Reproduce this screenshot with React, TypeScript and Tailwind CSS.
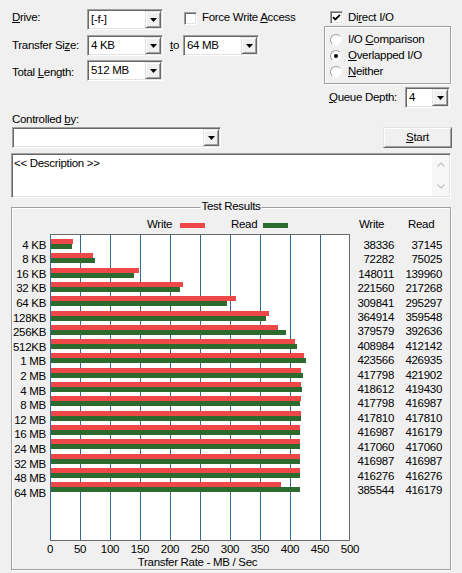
import React from 'react';

const rows: [string, number, number][] = [
  ['4 KB', 38336, 37145],
  ['8 KB', 72282, 75025],
  ['16 KB', 148011, 139960],
  ['32 KB', 221560, 217268],
  ['64 KB', 309841, 295297],
  ['128KB', 364914, 359548],
  ['256KB', 379579, 392636],
  ['512KB', 408984, 412142],
  ['1 MB', 423566, 426935],
  ['2 MB', 417798, 421902],
  ['4 MB', 418612, 419430],
  ['8 MB', 417798, 416987],
  ['12 MB', 417810, 417810],
  ['16 MB', 416987, 416179],
  ['24 MB', 417060, 417060],
  ['32 MB', 416987, 416987],
  ['48 MB', 416276, 416276],
  ['64 MB', 385544, 416179],
];

const sunken =
  'border border-t-[#a0a0a0] border-l-[#a0a0a0] border-r-white border-b-white shadow-[inset_1px_1px_0_#696969,inset_-1px_-1px_0_#e3e3e3]';
const raised =
  'border border-t-[#e3e3e3] border-l-[#e3e3e3] border-r-[#696969] border-b-[#696969] shadow-[inset_1px_1px_0_#fff,inset_-1px_-1px_0_#a0a0a0]';

function Arrow() {
  return (
    <svg width="7" height="4" viewBox="0 0 7 4">
      <path d="M0 0h7L3.5 4z" fill="#000" />
    </svg>
  );
}

function Combo({ value, className }: { value: string; className: string }) {
  return (
    <div className={`flex h-[21px] bg-white p-[1px] ${sunken} ${className}`}>
      <span className="flex-1 pl-[2px] leading-[17px] whitespace-nowrap">{value}</span>
      <span className={`w-[16px] h-full bg-[#f0f0f0] flex items-center justify-center ${raised}`}>
        <Arrow />
      </span>
    </div>
  );
}

function Check({ checked }: { checked?: boolean }) {
  return (
    <span className={`w-[13px] h-[13px] bg-white flex items-center justify-center ${sunken}`}>
      {checked && (
        <svg width="9" height="9" viewBox="0 0 9 9">
          <path d="M1 4.2l2.3 2.3L8 1.8" fill="none" stroke="#000" strokeWidth="1.8" />
        </svg>
      )}
    </span>
  );
}

function Radio({ checked }: { checked?: boolean }) {
  return (
    <span className="w-[12px] h-[12px] rounded-full bg-white border border-t-[#a0a0a0] border-l-[#a0a0a0] border-r-[#f4f4f4] border-b-[#f4f4f4] flex items-center justify-center">
      {checked && <span className="w-[4px] h-[4px] rounded-full bg-black" />}
    </span>
  );
}

function Chart() {
  return (
    <svg width="340" height="336" className="shrink-0 overflow-visible">
      <rect x="38.5" y="2.5" width="299" height="306" fill="#fff" stroke="#6a6a6a" />
      {[1, 2, 3, 4, 5, 6, 7, 8, 9].map((k) => (
        <line key={k} x1={38.5 + 30 * k} y1="3" x2={38.5 + 30 * k} y2="308" stroke="#336b98" />
      ))}
      <line x1="38.5" y1="3" x2="38.5" y2="308" stroke="#336b98" />
      {rows.map(([label, w, r], i) => {
        const y = Math.round(7 + i * 14.3);
        return (
          <g key={label}>
            <rect x="39" y={y} width={Math.round(50 + w * 0.0006) - 51} height="5" fill="#ee4747" />
            <rect x="39" y={y + 5} width={Math.round(50 + r * 0.0006) - 51} height="5" fill="#2d6a2d" />
            <text x="34" y={Math.round(16.5 + i * 14.6)} textAnchor="end">
              {label}
            </text>
          </g>
        );
      })}
      {[0, 50, 100, 150, 200, 250, 300, 350, 400, 450, 500].map((v, k) => (
        <text key={v} x={38 + 30 * k} y="321" textAnchor="middle">
          {v}
        </text>
      ))}
      <text x="185.5" y="334" textAnchor="middle">
        Transfer Rate - MB / Sec
      </text>
    </svg>
  );
}

export default function App() {
  return (
    <div className="w-[462px] h-[573px] bg-[#f0f0f0] text-black text-[11.5px] tracking-[-0.3px] overflow-hidden font-[Liberation_Sans,Arial,sans-serif]">
      {/* top controls */}
      <div className="flex">
        <div className="w-[324px] pl-[12px] pt-[9px]">
          <div className="flex items-center h-[21px]">
            <span className="w-[75px] mb-[3px]">
              <u>D</u>rive:
            </span>
            <Combo value="[-f-]" className="w-[76px]" />
            <span className="ml-[21px] mb-[3px] flex items-center">
              <Check />
              <span className="ml-[5px]">
                Force Write <u>A</u>ccess
              </span>
            </span>
          </div>
          <div className="flex items-center h-[21px] mt-[5px]">
            <span className="w-[75px]">
              Transfer Si<u>z</u>e:
            </span>
            <Combo value="4 KB" className="w-[76px]" />
            <span className="w-[20px] pl-[7px]">
              <u>t</u>o
            </span>
            <Combo value="64 MB" className="w-[76px]" />
          </div>
          <div className="flex items-center h-[21px] mt-[4px]">
            <span className="w-[75px] mt-[5px]">
              Total <u>L</u>ength:
            </span>
            <Combo value="512 MB" className="w-[76px]" />
          </div>
        </div>

        <div className="w-[127px] pt-[11px]">
          <div className="flex items-center h-[13px] pl-[6px]">
            <Check checked />
            <span className="ml-[5px]">
              Di<u>r</u>ect I/O
            </span>
          </div>
          <div className="mt-[2px] h-[58px] border border-[#a0a0a0] shadow-[inset_1px_1px_0_#fff,1px_1px_0_#fff] pt-[5px] pl-[5px]">
            <div className="flex items-center h-[16px]">
              <Radio />
              <span className="ml-[6px]">
                I/O <u>C</u>omparison
              </span>
            </div>
            <div className="flex items-center h-[16px]">
              <Radio checked />
              <span className="ml-[6px]">
                <u>O</u>verlapped I/O
              </span>
            </div>
            <div className="flex items-center h-[16px]">
              <Radio />
              <span className="ml-[6px]">
                <u>N</u>either
              </span>
            </div>
          </div>
          <div className="mt-[3px] flex items-center h-[21px] pl-[5px]">
            <span className="w-[76px]">
              <u>Q</u>ueue Depth:
            </span>
            <Combo value="4" className="w-[45px]" />
          </div>
        </div>
      </div>

      {/* controlled by + start */}
      <div className="flex items-end justify-between pl-[12px] pr-[10px] mt-[5px]">
        <div>
          <div className="leading-[13px] mb-[1px]">
            Controlled <u>b</u>y:
          </div>
          <Combo value="" className="w-[209px]" />
        </div>
        <button className={`w-[69px] h-[21px] bg-[#f0f0f0] ${raised} border-r-[#404040] border-b-[#404040]`}>
          <u>S</u>tart
        </button>
      </div>

      {/* description */}
      <div className={`ml-[11px] mt-[5px] w-[440px] h-[45px] bg-white p-[1px] flex ${sunken}`}>
        <div className="flex-1 pl-[1px] pt-[2px] leading-[13px]">&lt;&lt; Description &gt;&gt;</div>
        <div className="w-[17px] h-full bg-[#f7f7f7] flex flex-col items-center justify-between py-[7px]">
          <svg width="8" height="5" viewBox="0 0 8 5">
            <path d="M0.5 4.5L4 1l3.5 3.5" fill="none" stroke="#c2c2c2" strokeWidth="1.2" />
          </svg>
          <svg width="8" height="5" viewBox="0 0 8 5">
            <path d="M0.5 0.5L4 4l3.5-3.5" fill="none" stroke="#c2c2c2" strokeWidth="1.2" />
          </svg>
        </div>
      </div>

      {/* test results */}
      <div className="relative ml-[11px] mt-[9px] w-[440px] h-[363px] border border-[#a0a0a0] shadow-[inset_1px_1px_0_#fff,1px_1px_0_#fff] pt-[10px]">
        <span className="absolute left-1/2 -translate-x-1/2 -top-[8px] px-[1px] bg-[#f0f0f0] leading-[13px] whitespace-nowrap">
          Test Results
        </span>
        <div className="flex items-center h-[14px] pl-[135px]">
          <span className="w-[33px]">Write</span>
          <span className="w-[25px] h-[5px] bg-[#ee4747]" />
          <span className="w-[26px]" />
          <span className="w-[32px]">Read</span>
          <span className="w-[25px] h-[5px] bg-[#2d6a2d]" />
          <span className="w-[71px]" />
          <span className="w-[49px]">Write</span>
          <span>Read</span>
        </div>
        <div className="flex">
          <Chart />
          <div className="flex pt-[6px] leading-[14.4px]">
            <div className="w-[42px] text-right">
              {rows.map(([l, w]) => (
                <div key={l}>{w}</div>
              ))}
            </div>
            <div className="w-[48px] text-right">
              {rows.map(([l, , r]) => (
                <div key={l}>{r}</div>
              ))}
            </div>
          </div>
        </div>
      </div>
    </div>
  );
}
